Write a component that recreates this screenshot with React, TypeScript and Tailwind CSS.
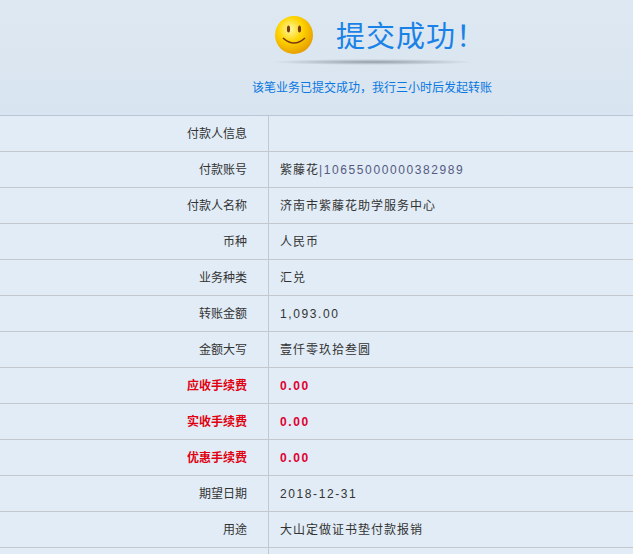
import React from "react";

const rows: [string, string, boolean?][] = [
  ["付款人信息", ""],
  ["付款账号", "紫藤花|10655000000382989"],
  ["付款人名称", "济南市紫藤花助学服务中心"],
  ["币种", "人民币"],
  ["业务种类", "汇兑"],
  ["转账金额", "1,093.00"],
  ["金额大写", "壹仟零玖拾叁圆"],
  ["应收手续费", "0.00", true],
  ["实收手续费", "0.00", true],
  ["优惠手续费", "0.00", true],
  ["期望日期", "2018-12-31"],
  ["用途", "大山定做证书垫付款报销"],
  ["", ""],
];

export default function App() {
  return (
    <div className="w-[633px] h-[554px] overflow-hidden bg-[#e1ecf6]" style={{ fontFamily: "'Liberation Sans', 'Noto Sans CJK SC', sans-serif" }}>
      <div className="h-[116px] bg-gradient-to-b from-[#dde8f2] to-[#d8e4ef] border-b border-[#b9c7d6] flex flex-col">
        <div className="mt-[13px] ml-[274px] flex items-center gap-[22px]">
          <svg width="40" height="40" viewBox="0 0 40 40">
            <defs>
              <radialGradient id="g" cx="40%" cy="35%" r="65%">
                <stop offset="0" stopColor="#fff8a0" />
                <stop offset="0.5" stopColor="#ffd400" />
                <stop offset="1" stopColor="#e8a000" />
              </radialGradient>
            </defs>
            <circle cx="20" cy="20" r="19" fill="url(#g)" />
            <ellipse cx="14.5" cy="14" rx="1.6" ry="3.5" fill="#7a3a10" />
            <ellipse cx="25.5" cy="14" rx="1.6" ry="3.5" fill="#7a3a10" />
            <path d="M9 23 Q20 33 31 23" stroke="#7a3a10" strokeWidth="1.6" fill="none" />
          </svg>
          <span className="text-[29px] text-[#1a82e6] tracking-[1px]" style={{ fontFamily: "'Noto Sans CJK SC', sans-serif" }}>提交成功！</span>
        </div>
        <div className="w-[205px] h-[6px] mt-[2px] ml-[270px] rounded-full bg-[radial-gradient(ellipse_at_center,rgba(90,100,110,0.55),rgba(200,210,220,0)_70%)]" />
        <div className="mt-[14px] text-[12px] text-[#0a78e0] ml-[252px]">该笔业务已提交成功，我行三小时后发起转账</div>
      </div>
      <div>
        {rows.map(([l, v, red], i) => (
          <div key={i} className="flex h-[36px] border-b border-[#c4c8cc] text-[12px]">
            <div className={`w-[269px] border-r border-[#c4c8cc] flex items-center justify-end pr-[21px] ${red ? "text-[#e00010] font-bold" : "text-[#333]"}`}>{l}</div>
            <div className={`flex items-center pl-[11px] ${/\d/.test(v) ? "tracking-[1.6px]" : "tracking-[1px]"} ${red ? "text-[#e00030] font-bold" : "text-[#333]"}`}>
              {v.includes("|") ? (<><span className="tracking-[1px]">紫藤花</span><span className="text-[#555a80]">|10655000000382989</span></>) : v}
            </div>
          </div>
        ))}
      </div>
    </div>
  );
}
